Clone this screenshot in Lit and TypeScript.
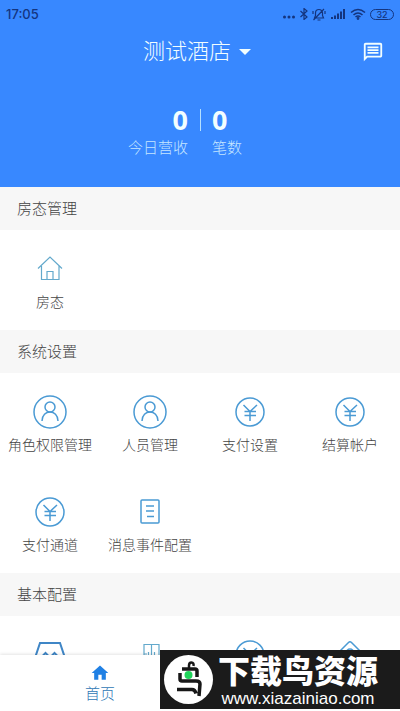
import { LitElement, html, css, svg } from "lit";
import { customElement } from "lit/decorators.js";

const icons = {
  house: svg`<svg width="30" height="30" viewBox="0 0 30 30" class="thin"><path d="M3 14.5 15 3l12 11.5M6.5 12v13.5h17.5V12M12 25.5v-8h6v8"/></svg>`,
  person: svg`<svg width="34" height="34" viewBox="0 0 34 34" class="line"><circle cx="17" cy="17" r="16"/><circle cx="17" cy="12" r="5"/><path d="M9 26c0-12 16-12 16 0"/></svg>`,
  yen: svg`<svg width="30" height="30" viewBox="0 0 30 30" class="line"><circle cx="15" cy="15" r="14"/><path d="M8.5 8 15 14.5 22 8M9.5 14.5h11.5M9.5 18.5h11.5M15 14.5V24"/></svg>`,
  list: svg`<svg width="30" height="30" viewBox="0 0 30 30" class="line"><rect x="6" y="3" width="18" height="23" rx="1"/><path d="M11 9h8M11 14h8M12 19.5h7"/></svg>`,
  shop: svg`<svg width="30" height="30" viewBox="0 0 30 30" class="bold"><path d="M5 3h20l4 12c-2 3-4 3-6.500 1l-3-3-3 3q-1.500 1-3 0l-3-3-3 3C5 18 3 18 1 15ZM4 18v9h22v-9"/></svg>`,
  cabinet: svg`<svg width="30" height="30" viewBox="0 0 30 30" class="thin"><path d="M9 26V4.5h15V26ZM16.5 4.5V26M13.5 12v4M19.5 12v4M9 14h3"/></svg>`,
  diamond: svg`<svg width="30" height="30" viewBox="0 0 30 30" class="line"><path d="M13.5 2.5q1.500-1.500 3 0l10 10q1.500 1.500 0 3l-10 10q-1.500 1.500-3 0l-10-10q-1.500-1.500 0-3Z"/><circle cx="15" cy="13" r="4"/></svg>`,
};

type IconName = keyof typeof icons;

const sections: { title: string; items: { icon: IconName; label: string }[] }[] = [
  { title: "房态管理", items: [{ icon: "house", label: "房态" }] },
  {
    title: "系统设置",
    items: [
      { icon: "person", label: "角色权限管理" },
      { icon: "person", label: "人员管理" },
      { icon: "yen", label: "支付设置" },
      { icon: "yen", label: "结算帐户" },
      { icon: "yen", label: "支付通道" },
      { icon: "list", label: "消息事件配置" },
    ],
  },
  {
    title: "基本配置",
    items: [
      { icon: "shop", label: "" },
      { icon: "cabinet", label: "" },
      { icon: "yen", label: "" },
      { icon: "diamond", label: "" },
    ],
  },
];

@customElement("app-root")
export class AppRoot extends LitElement {
  static styles = css`
    :host {
      display: flex;
      flex-direction: column;
      position: relative;
      height: 100vh;
      overflow: hidden;
      background: #fff;
      color: #444;
      font-family: Roboto, "Noto Sans CJK SC", sans-serif;
      font-size: 14px;
      font-weight: 300;
      line-height: 20px;
    }
    * { box-sizing: border-box; }
    svg { display: block; fill: none; flex: none; }
    button {
      border: 0;
      padding: 0;
      background: none;
      color: inherit;
      font: inherit;
      cursor: pointer;
    }
    h2 { margin: 0; font-weight: 300; }
    .scroll { flex: 1; min-height: 0; overflow: hidden; }
    .header { background: #3888ff; color: #f2feff; padding-bottom: 27px; }
    .status {
      display: flex;
      align-items: center;
      justify-content: space-between;
      height: 28px;
      padding: 0 6px;
      color: #14357f;
    }
    .time { font: 500 13px/20px Inter, sans-serif; }
    .signals { display: flex; align-items: center; gap: 4px; }
    .signals svg { stroke: #14357f; stroke-width: 1.2; }
    .signals .solid { fill: #14357f; }
    .battery {
      width: 24px;
      height: 11px;
      border: 1px solid #14357f;
      border-radius: 6px;
      font: 500 9px/9px Inter, sans-serif;
      text-align: center;
    }
    .bar {
      display: grid;
      grid-template-columns: 1fr auto 1fr;
      align-items: center;
      height: 48px;
      padding: 0 16px 0 10px;
    }
    .hotel {
      grid-column: 2;
      display: flex;
      align-items: center;
      gap: 8px;
      font-size: 22px;
      line-height: 32px;
    }
    .hotel svg { fill: #f2feff; }
    .message { justify-self: end; }
    .message svg { fill: #f2feff; }
    .stats {
      position: relative;
      display: grid;
      grid-template-columns: 1fr 1fr;
      margin-top: 28px;
    }
    .stat { display: flex; flex-direction: column; padding: 0 12px; }
    .stat:first-child { align-items: flex-end; }
    .value { font: 700 27px/32px "Noto Sans", sans-serif; }
    .caption { font-size: 15px; line-height: 24px; color: #c6e6ff; }
    .divider {
      position: absolute;
      left: 50%;
      top: 5px;
      width: 1px;
      height: 22px;
      background: #b5e0ff;
    }
    .heading {
      height: 43px;
      padding: 0 17px;
      background: #f7f7f7;
      font-size: 15px;
      line-height: 45px;
    }
    .grid { display: grid; grid-template-columns: repeat(4, 1fr); }
    .cell {
      display: flex;
      flex-direction: column;
      align-items: center;
      height: 100px;
      padding-top: 22px;
      white-space: nowrap;
    }
    .icon { display: grid; place-items: center; height: 34px; margin-bottom: 6px; }
    .icon svg { stroke: #4a9ad4; stroke-width: 1.5; }
    .icon .thin { stroke: #63a9cc; stroke-width: 1.2; }
    .icon .bold { stroke: #3f86c6; stroke-width: 2; }
    .tabs {
      display: grid;
      grid-template-columns: 1fr 1fr;
      height: 56px;
      background: #fff;
      box-shadow: 0 -1px 3px #0000001c;
      z-index: 1;
    }
    .tab {
      display: flex;
      flex-direction: column;
      align-items: center;
      padding-top: 8px;
      color: #2f77b5;
      font-size: 15px;
      line-height: 22px;
    }
    .tab svg { fill: #2080e4; }
    .banner {
      position: absolute;
      z-index: 2;
      right: 0;
      bottom: 2px;
      width: 60%;
      height: 59px;
      display: flex;
      align-items: center;
      gap: 4px;
      padding-left: 3px;
      background: #1b1b1b;
      color: #fff;
    }
    .words {
      display: flex;
      flex-direction: column;
      align-items: center;
      padding-top: 2px;
      white-space: nowrap;
    }
    .brand { font-size: 32px; line-height: 36px; font-weight: 900; }
    .site {
      color: #fff;
      text-decoration: none;
      font: 17px/18px "Liberation Sans", sans-serif;
    }
  `;

  render() {
    return html`
      <main class="scroll">
        <header class="header">
          <div class="status">
            <span class="time">17:05</span>
            <div class="signals">
              <svg width="14" height="12" viewBox="0 0 14 12"><g class="solid" stroke="none"><circle cx="2.5" cy="9" r="1.5"/><circle cx="7" cy="9" r="1.5"/><circle cx="11.5" cy="9" r="1.5"/></g></svg>
              <svg width="8" height="12" viewBox="0 0 8 12"><path d="M.5 3 7 9 4 11.5V.5L7 3 .5 9"/></svg>
              <svg width="14" height="13" viewBox="0 0 14 13"><path d="M2.5 10h9L10.5 7.5V5a3.5 3.5 0 0 0-7 0v2.5ZM5.5 12h3M1.5 12 12 1M1 3v3M13 3v3"/></svg>
              <svg width="16" height="12" viewBox="0 0 16 12"><path class="solid" stroke="none" d="M1 9h2v2H1zM4 7.5h2V11H4zM7 5.5h2V11H7zM10 3.5h2V11h-2zM13 1h2v10h-2z"/></svg>
              <svg width="16" height="12" viewBox="0 0 16 12"><path d="M1 4.500q7-6 14 0M3.500 7q4.500-4 9 0M5.500 9q2.500-2 5 0" stroke-width="1.6"/><circle cx="8" cy="10.5" r=".8"/></svg>
              <span class="battery">32</span>
            </div>
          </div>
          <div class="bar">
            <button class="hotel">
              测试酒店
              <svg width="12" height="6" viewBox="0 0 12 6"><path d="M0 0h12L6 6Z"/></svg>
            </button>
            <button class="message" aria-label="消息">
              <svg width="22" height="22" viewBox="0 0 24 24"><path d="M4 4h16v12H5.170L4 17.170V4m0-2c-1.100 0-1.990.900-1.990 2L2 22l4-4h14c1.100 0 2-.900 2-2V4c0-1.100-.900-2-2-2H4zm2 10h12v2H6v-2zm0-3h12v2H6V9zm0-3h12v2H6V6z"/></svg>
            </button>
          </div>
          <div class="stats">
            <div class="stat"><span class="value">0</span><span class="caption">今日营收</span></div>
            <div class="stat"><span class="value">0</span><span class="caption">笔数</span></div>
            <span class="divider"></span>
          </div>
        </header>
        ${sections.map(
          (s) => html`
            <section>
              <h2 class="heading">${s.title}</h2>
              <div class="grid">
                ${s.items.map(
                  (i) => html`<button class="cell"><span class="icon">${icons[i.icon]}</span>${i.label}</button>`
                )}
              </div>
            </section>
          `
        )}
      </main>
      <nav class="tabs">
        <button class="tab">
          <svg width="20" height="20" viewBox="0 0 24 24"><path d="M10 20v-6h4v6h5v-8h3L12 3 2 12h3v8z"/></svg>
          首页
        </button>
      </nav>
      <aside class="banner">
        <svg width="51" height="51" viewBox="0 0 51 51">
          <circle cx="25.5" cy="25.5" r="24.5" fill="#fff"/>
          <g stroke="#171717" stroke-width="3.5" stroke-linejoin="round">
            <path d="M19 15h13q2 0 2 2v6M17 19v6q0 2 2 2h14q4 0 4 3l-1 12M14 35.500h15q3 0 4 4"/>
            <path d="M26 14v-2.500q0-3 2.500-3t2 3.500" stroke-width="2.5"/>
          </g>
          <circle cx="25.5" cy="21" r="4" fill="#20d45a"/>
        </svg>
        <div class="words">
          <span class="brand">下载鸟资源</span>
          <a class="site" href="#">www.xiazainiao.com</a>
        </div>
      </aside>
    `;
  }
}
